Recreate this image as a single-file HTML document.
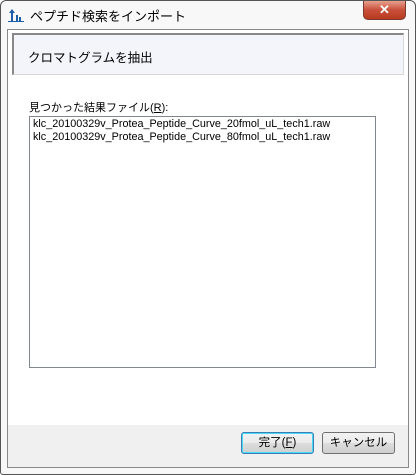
<!DOCTYPE html>
<html><head><meta charset="utf-8"><style>
*{margin:0;padding:0;box-sizing:border-box}
body{width:416px;height:475px;overflow:hidden;background:#fff;font-family:"Liberation Sans","Noto Sans CJK JP",sans-serif;font-size:12px;color:#000;position:relative}
.frame{position:absolute;left:0;top:0;width:416px;height:475px;border:1px solid #555;border-radius:6px 6px 3px 3px;background:#f8f8f8}
.title{position:absolute;left:30px;top:6px;font-size:13px}
.icon{position:absolute;left:8px;top:8px}
.close{position:absolute;left:363px;top:1px;width:43px;height:19px;border:1px solid #7a3a30;border-top:none;border-radius:0 0 5px 5px;background:linear-gradient(#e8a08e,#c8503a 50%,#b83a20);color:#fff;text-align:center;font-weight:bold;font-size:13px;line-height:18px}
.client{position:absolute;left:7px;top:29px;width:402px;height:439px;border:1px solid #8a8a8a;background:#fff}
.hdr{position:absolute;left:4px;top:3px;width:392px;height:42px;background:#f4f5fa;border:1px solid #d8d8d8;border-left:2px solid #888;border-top:2px solid #888}
.hdr span{position:absolute;left:14px;top:12px;font-size:12.5px}
.lbl{position:absolute;left:21px;top:69px;font-size:11px}
.list{position:absolute;left:21px;top:86px;width:347px;height:252px;border:1px solid #828790;padding:1px 3px;line-height:13px;font-size:10.8px}
.bot{position:absolute;left:0;top:395px;width:400px;height:42px;background:#f0f0f0}
.btn{position:absolute;top:7px;width:73px;height:22px;border:1px solid #707070;border-radius:3px;background:linear-gradient(#f2f2f2,#ebebeb 50%,#dddddd 51%,#cfcfcf);text-align:center;line-height:20px;font-size:11.5px}
.b1{left:233px;border-color:#3c7fb1;box-shadow:inset 0 0 0 1px #48d8fb}
.b2{left:314px}
</style></head><body>
<div class="frame"></div>
<svg class="icon" width="16" height="14" viewBox="0 0 16 14"><path d="M4 1 L1 5 H3 V13 H5 V5 H7Z" fill="#1a5fa8"/><rect x="8" y="7" width="2" height="6" fill="#1a5fa8"/><rect x="11" y="9" width="2" height="4" fill="#1a5fa8"/><rect x="0" y="13" width="16" height="1" fill="#1a5fa8"/></svg>
<div class="title">ペプチド検索をインポート</div>
<div class="close">✕</div>
<div class="client">
<div class="hdr"><span>クロマトグラムを抽出</span></div>
<div class="lbl">見つかった結果ファイル(<u>R</u>):</div>
<div class="list">klc_20100329v_Protea_Peptide_Curve_20fmol_uL_tech1.raw<br>klc_20100329v_Protea_Peptide_Curve_80fmol_uL_tech1.raw</div>
<div class="bot">
<div class="btn b1">完了(<u>F</u>)</div>
<div class="btn b2">キャンセル</div>
</div>
</div>
</body></html>
